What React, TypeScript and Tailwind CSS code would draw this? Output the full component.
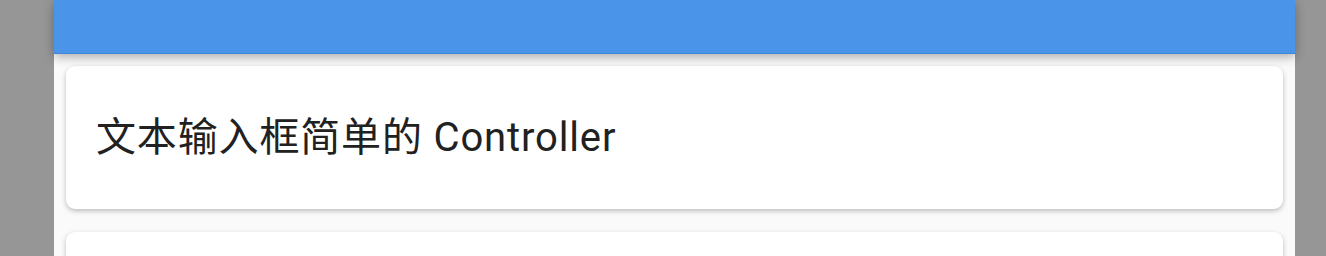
export default function App() {
  return (
    <div className="flex h-[256px] overflow-hidden bg-[#969696]">
      <div className="ml-[54px] flex w-[1241px] flex-col bg-[#fafafa]">
        <div className="relative z-10 h-[54px] shrink-0 border-b border-[#3f86d9] bg-[#4a94ea] shadow-[0_3px_10px_rgba(0,0,0,0.32)]" />
        <div className="flex flex-col gap-[23px] px-[12px] pt-[12px]">
          <div className="flex h-[143px] shrink-0 items-center rounded-[9px] bg-white px-[30px] shadow-[0_2px_5px_rgba(0,0,0,0.25)]">
            <span className="text-[40px] leading-none tracking-[0.85px] text-[#212121] [font-family:Roboto,'Noto_Sans_CJK_SC',sans-serif]">
              文本输入框简单的 Controller
            </span>
          </div>
          <div className="h-[143px] shrink-0 rounded-[9px] bg-white shadow-[0_2px_5px_rgba(0,0,0,0.25)]" />
        </div>
      </div>
    </div>
  );
}
